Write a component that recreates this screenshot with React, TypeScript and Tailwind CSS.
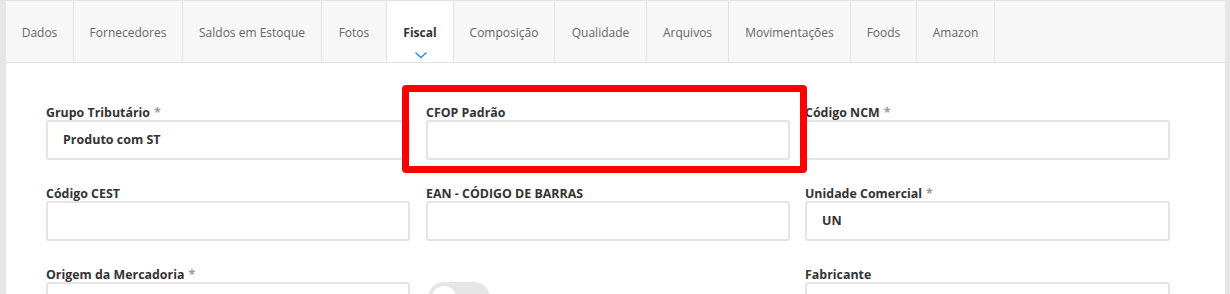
import React from 'react';

const tabs = [
  { label: 'Dados', w: 'w-[68px]' },
  { label: 'Fornecedores', w: 'w-[109px]' },
  { label: 'Saldos em Estoque', w: 'w-[139px]' },
  { label: 'Fotos', w: 'w-[65px]' },
  { label: 'Fiscal', w: 'w-[67px]', active: true },
  { label: 'Composição', w: 'w-[101px]' },
  { label: 'Qualidade', w: 'w-[92px]' },
  { label: 'Arquivos', w: 'w-[82px]' },
  { label: 'Movimentações', w: 'w-[122px]' },
  { label: 'Foods', w: 'w-[66px]' },
  { label: 'Amazon', w: 'w-[78px]' },
];

const Field: React.FC<{ label: string; required?: boolean; value?: string }> = ({ label, required, value }) => (
  <div className="flex flex-col">
    <label className="h-4 leading-[18px] text-[12.4px] font-bold text-[#333] whitespace-nowrap">
      {label}
      {required && <span className="text-[#999] ml-1">*</span>}
    </label>
    <div className="h-10 border-2 border-[#e4e4e4] rounded-[3px] bg-white flex items-center pl-[15px] text-[12.5px] font-bold text-[#333]">
      {value}
    </div>
  </div>
);

const App: React.FC = () => {
  return (
    <div className="w-[1230px] h-[294px] overflow-hidden bg-[#e6e6e6] pl-[6px] pr-[5px] font-['Open_Sans',sans-serif]">
      <div className="bg-white h-full relative">
        {/* Tabs */}
        <div className="flex h-[63px] border-t border-b border-[#dde3ea] bg-[#f7f7f7]">
          {tabs.map(t => (
            <div
              key={t.label}
              className={`${t.w} relative flex items-center justify-center pt-[3px] border-r border-[#e3e3e3] text-[12px] ${
                t.active ? 'bg-white font-bold text-[#333]' : 'text-[#666]'
              }`}
            >
              {t.label}
              {t.active && (
                <svg className="absolute left-[27px] top-[50px]" width="14" height="8" viewBox="0 0 14 8">
                  <polyline points="1.5,1.5 7,6.5 12.5,1.5" fill="none" stroke="#2c8ef8" strokeWidth="1.6" />
                </svg>
              )}
            </div>
          ))}
        </div>

        {/* Form */}
        <div className="pt-[41px] pl-[40px] grid grid-cols-[364px_364px_364px] gap-x-4 gap-y-[25px] w-max">
          <Field label="Grupo Tributário" required value="Produto com ST" />
          <Field label="CFOP Padrão" />
          <div className="-ml-[1px]"><Field label="Código NCM" required /></div>
          <Field label="Código CEST" />
          <Field label="EAN - CÓDIGO DE BARRAS" />
          <div className="-ml-[1px]"><Field label="Unidade Comercial" required value="UN" /></div>
          <Field label="Origem da Mercadoria" required />
          <div className="flex flex-col">
            <div className="h-4" />
            <div className="ml-[2px] w-[62px] h-[32px] rounded-full bg-[#e6e6e6] p-[4px]">
              <div className="w-[24px] h-[24px] rounded-full bg-white" />
            </div>
          </div>
          <div className="-ml-[1px]"><Field label="Fabricante" /></div>
        </div>

        {/* Highlight annotation */}
        <div className="absolute left-[396px] top-[85px] w-[405px] h-[88px] border-[7px] border-[#ff0000] rounded-[4px] pointer-events-none" />
      </div>
    </div>
  );
};

export default App;
